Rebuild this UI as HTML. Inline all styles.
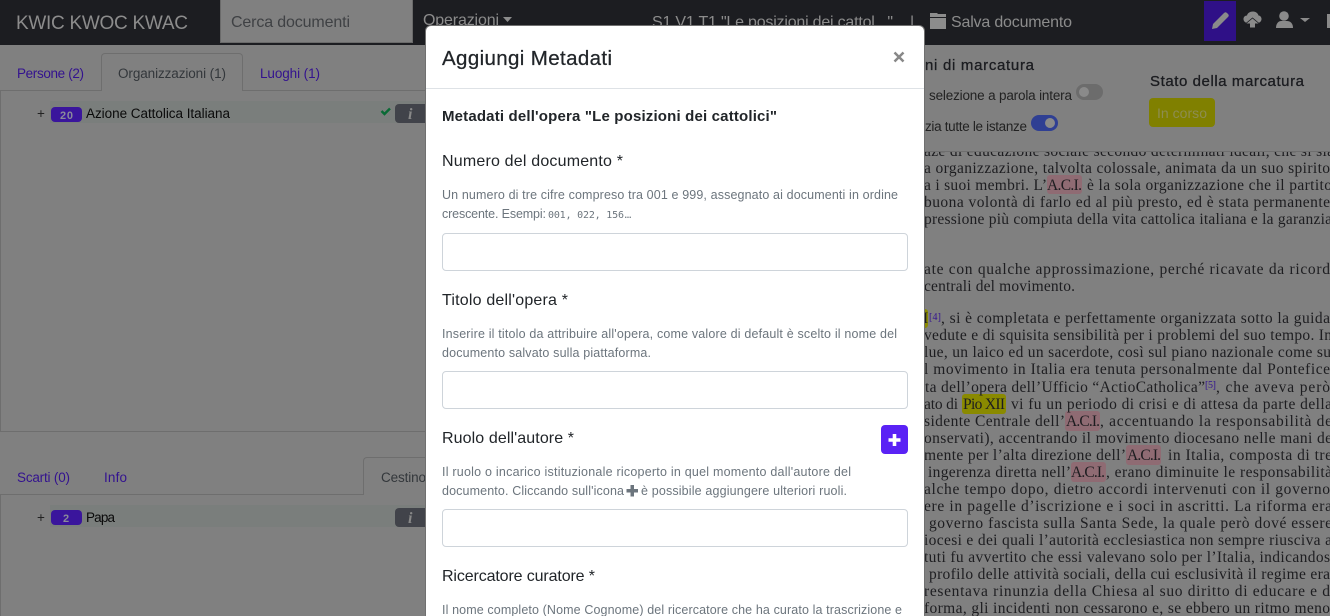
<!DOCTYPE html>
<html lang="it"><head><meta charset="utf-8"><title>KWIC KWOC KWAC</title>
<style>
html,body{margin:0;padding:0;width:1330px;height:616px;overflow:hidden;background:#808080}
.b{position:absolute;box-sizing:border-box}
svg{position:absolute;left:0;top:0}
text{font-family:"Liberation Sans",sans-serif;white-space:pre}
.s{font-family:"Liberation Serif",serif;font-size:15.5px;fill:#1d1d20}
.n{font-size:16px;fill:#8c8c8c}
.l{font-size:13.5px;fill:#33128f}
.a{font-size:13.5px;fill:#33373b}
.d{font-size:13.5px;fill:#0a0a0a}
.m{font-size:16px;fill:#212529}
.h{font-size:12.5px;fill:#6c757d}
.u{font-size:15px;fill:#1b1c20;stroke:#1b1c20;stroke-width:.3px}
</style></head><body>
<div class="b" style="left:0;top:0;width:1330px;height:45px;background:#1c1d21"></div>
<input class="b" style="left:220px;top:0;width:193px;height:43px;background:#808080;border:1px solid #6a6a6a;border-top:0;padding:0" aria-label="Cerca">
<div class="b" style="left:1204px;top:1px;width:32px;height:40px;background:#2f1087"></div>

<div class="b" style="left:0;top:90px;width:426px;height:342px;border:1px solid #6e6e6e;border-right:0"></div>
<div class="b" style="left:101px;top:53px;width:142px;height:38px;background:#808080;border:1px solid #6e6e6e;border-bottom:0;border-radius:4px 4px 0 0"></div>
<div class="b" style="left:50px;top:101px;width:376px;height:22px;background:#7a7e7c"></div>
<div class="b" style="left:51px;top:107px;width:31px;height:15px;background:#3a159c;border-radius:4px"></div>
<div class="b" style="left:395px;top:104px;width:31px;height:19px;background:#41434a;border-radius:4px 0 0 4px"></div>

<div class="b" style="left:0;top:494px;width:426px;height:122px;border:1px solid #6e6e6e;border-right:0;border-bottom:0"></div>
<div class="b" style="left:363px;top:457px;width:63px;height:38px;background:#808080;border:1px solid #6e6e6e;border-bottom:0;border-right:0;border-radius:4px 0 0 0"></div>
<div class="b" style="left:50px;top:505px;width:376px;height:22px;background:#7a7e7c"></div>
<div class="b" style="left:51px;top:510px;width:31px;height:15px;background:#3a159c;border-radius:4px"></div>
<div class="b" style="left:395px;top:508px;width:31px;height:19px;background:#41434a;border-radius:4px 0 0 4px"></div>

<div class="b" style="left:1076px;top:84px;width:27px;height:16px;background:#6c6c6c;border-radius:8px"></div>
<div class="b" style="left:1079px;top:87px;width:10px;height:10px;background:#8a8a8a;border-radius:50%"></div>
<div class="b" style="left:1031px;top:115px;width:27px;height:16px;background:#2f3f93;border-radius:8px"></div>
<div class="b" style="left:1045px;top:118px;width:10px;height:10px;background:#8a8a8a;border-radius:50%"></div>
<div class="b" style="left:1149px;top:98px;width:66px;height:29px;background:#808000;border-radius:4px"></div>
<div class="b" style="left:924px;top:151px;width:406px;height:1px;background:#6e6e6e"></div>

<div class="b" style="left:1047px;top:175px;width:35px;height:19px;background:#8f6b73;border-radius:3px"></div>
<div class="b" style="left:920px;top:309px;width:8px;height:19px;background:#8a8a00;border-radius:3px"></div>
<div class="b" style="left:962px;top:394px;width:44px;height:20px;background:#8a8a00;border-radius:3px"></div>
<div class="b" style="left:1065px;top:411px;width:35px;height:20px;background:#8f6b73;border-radius:3px"></div>
<div class="b" style="left:1126px;top:445px;width:35px;height:20px;background:#8f6b73;border-radius:3px"></div>
<div class="b" style="left:1071px;top:462px;width:35px;height:20px;background:#8f6b73;border-radius:3px"></div>

<svg width="1330" height="616" viewBox="0 0 1330 616">
<defs><clipPath id="cl"><rect x="924" y="152" width="406" height="464"/></clipPath></defs>
<text class="n" x="16" y="29" style="font-size:19px" textLength="172">KWIC KWOC KWAC</text>
<text x="231" y="27" style="font-size:16px;fill:#3f4144" textLength="119">Cerca documenti</text>
<text class="n" x="423" y="25" textLength="76">Operazioni</text>
<path d="M503 17h9l-4.5 5z" fill="#8c8c8c"/>
<text class="n" x="652" y="27" textLength="241">S1 V1 T1 "Le posizioni dei cattol..."</text>
<text class="n" x="910" y="27">|</text>
<path d="M930 15v-2h7l1 1h8v3h-16zM930 18h16v11h-16z" fill="#8c8c8c"/>
<text class="n" x="951" y="27" textLength="121">Salva documento</text>
<path d="M1212 29l1-5 11-11c1-1 2-1 3 0l1 1c1 1 1 2 0 3l-11 11z" fill="#8a8a8a"/>
<path d="M1248 23c-3 0-4.500-2-4.500-4 0-2 1.500-3.500 3.500-3.500 .5-2.500 3-4 6-4 3 0 5 2 5.500 4 2 .2 3 2 3 3.500 0 2-1.500 4-4 4z" fill="#8a8a8a"/>
<path d="M1252.500 18.500l6 5h-3.500v4h-5v-4h-3.500z" fill="#8a8a8a" stroke="#1c1d21" stroke-width="1.500" paint-order="stroke"/>
<circle cx="1284" cy="16" r="4.800" fill="#8a8a8a"/><path d="M1276 28c0-5 3-7 5-7h6c3 0 6 2 6 7z" fill="#8a8a8a"/>
<path d="M1300 18h10l-5 4z" fill="#8a8a8a"/>
<rect x="1327" y="14" width="4" height="14" fill="#8a8a8a"/>

<text class="l" x="17" y="78" textLength="67">Persone (2)</text>
<text class="a" x="118" y="78" textLength="108">Organizzazioni (1)</text>
<text class="l" x="260" y="78" textLength="60">Luoghi (1)</text>
<text class="d" x="37" y="118" style="fill:#222">+</text>
<text x="60" y="119" style="font-size:11px;font-weight:700;fill:#8a8a9a" textLength="13">20</text>
<text class="d" x="86" y="118" textLength="144">Azione Cattolica Italiana</text>
<path d="M381.500 111l3 3 5.500-5.500" stroke="#0a6a35" stroke-width="2.400" fill="none"/>
<text x="408" y="119" style="font-family:'Liberation Serif',serif;font-style:italic;font-weight:700;font-size:16px;fill:#888">i</text>

<text class="l" x="17" y="482" textLength="53">Scarti (0)</text>
<text class="l" x="104" y="482" textLength="23">Info</text>
<text class="a" x="381" y="482" textLength="45">Cestino</text>
<text class="d" x="37" y="522" style="fill:#222">+</text>
<text x="63" y="522" style="font-size:11px;font-weight:700;fill:#8a8a9a">2</text>
<text class="d" x="86" y="522" textLength="29">Papa</text>
<text x="408" y="523" style="font-family:'Liberation Serif',serif;font-style:italic;font-weight:700;font-size:16px;fill:#888">i</text>

<text class="u" x="925" y="70" textLength="109">ni di marcatura</text>
<text class="d" x="929" y="100" style="fill:#222" textLength="143">selezione a parola intera</text>
<text class="d" x="925" y="131" style="fill:#222" textLength="102">zia tutte le istanze</text>
<text class="u" x="1150" y="86" textLength="154">Stato della marcatura</text>
<text x="1157" y="118" style="font-size:14px;fill:#8d8d50" textLength="50">In corso</text>

<g clip-path="url(#cl)">
<text class="s" x="924" y="156" textLength="410">aze di educazione sociale secondo determinati ideali, che si sia</text>
<text class="s" x="924" y="173" textLength="406">a organizzazione, talvolta colossale, animata da un suo spirito</text>
<text class="s" x="924" y="190" textLength="123">a i suoi membri. L’</text>
<text class="s" x="1047" y="190" textLength="35">A.C.I.</text>
<text class="s" x="1087" y="190" textLength="245">è la sola organizzazione che il partito</text>
<text class="s" x="924" y="207" textLength="406">buona volontà di farlo ed al più presto, ed è stata permanente</text>
<text class="s" x="924" y="224" textLength="408">pressione più compiuta della vita cattolica italiana e la garanzia</text>
<text class="s" x="924" y="274" textLength="406">ate con qualche approssimazione, perché ricavate da ricord</text>
<text class="s" x="924" y="291" textLength="151">centrali del movimento.</text>
<text class="s" x="923" y="323">I</text>
<text x="929" y="320" style="font-family:'Liberation Serif',serif;font-size:10px;fill:#33128f" textLength="12">[4]</text>
<text class="s" x="941" y="323" textLength="389">, si è completata e perfettamente organizzata sotto la guida</text>
<text class="s" x="924" y="340" textLength="408">vedute e di squisita sensibilità per i problemi del suo tempo. In</text>
<text class="s" x="924" y="357" textLength="407">lue, un laico ed un sacerdote, così sul piano nazionale come su</text>
<text class="s" x="924" y="374" textLength="406">l movimento in Italia era tenuta personalmente dal Pontefice</text>
<text class="s" x="925" y="392" textLength="280">ta dell’opera dell’Ufficio “ActioCatholica”</text>
<text x="1205" y="388" style="font-family:'Liberation Serif',serif;font-size:10px;fill:#33128f" textLength="11">[5]</text>
<text class="s" x="1216" y="392" textLength="114">, che aveva però</text>
<text class="s" x="924" y="409" textLength="34">ato di</text>
<text class="s" x="963" y="409" textLength="42">Pio XII</text>
<text class="s" x="1011" y="409" textLength="321">vi fu un periodo di crisi e di attesa da parte della</text>
<text class="s" x="924" y="426" textLength="141">sidente Centrale dell’</text>
<text class="s" x="1066" y="426" textLength="34">A.C.I.</text>
<text class="s" x="1100" y="426" textLength="232">, accentuando la responsabilità de</text>
<text class="s" x="924" y="443" textLength="408">onservati), accentrando il movimento diocesano nelle mani de</text>
<text class="s" x="924" y="460" textLength="202">mente per l’alta direzione dell’</text>
<text class="s" x="1127" y="460" textLength="34">A.C.I.</text>
<text class="s" x="1168" y="460" textLength="164">in Italia, composta di tre</text>
<text class="s" x="928" y="477" textLength="143">ingerenza diretta nell’</text>
<text class="s" x="1071" y="477" textLength="34">A.C.I.</text>
<text class="s" x="1106" y="477" textLength="226">, erano diminuite le responsabilità</text>
<text class="s" x="924" y="494" textLength="406">alche tempo dopo, dietro accordi intervenuti con il governo</text>
<text class="s" x="924" y="511" textLength="408">ere in pagelle d’iscrizione e i soci in ascritti. La riforma era</text>
<text class="s" x="929" y="528" textLength="403">governo fascista sulla Santa Sede, la quale però dové essere</text>
<text class="s" x="924" y="545" textLength="408">iocesi e dei quali l’autorità ecclesiastica non sempre riusciva a</text>
<text class="s" x="924" y="562" textLength="406">tuti fu avvertito che essi valevano solo per l’Italia, indicandos</text>
<text class="s" x="929" y="579" textLength="401">profilo delle attività sociali, della cui esclusività il regime era</text>
<text class="s" x="924" y="596" textLength="406">resentava rinunzia della Chiesa al suo diritto di educare e d</text>
<text class="s" x="924" y="613" textLength="406">forma, gli incidenti non cessarono e, se ebbero un ritmo meno</text>
</g>
</svg>

<div class="b" style="left:425px;top:25px;width:500px;height:591px;background:#fff;border-radius:6px 6px 0 0;border:1px solid #707070;border-bottom:0"></div>
<div class="b" style="left:426px;top:88px;width:498px;height:1px;background:#dee2e6"></div>
<input class="b" style="left:442px;top:233px;width:466px;height:38px;border:1px solid #ced4da;border-radius:4px;background:#fff" aria-label="Numero">
<input class="b" style="left:442px;top:371px;width:466px;height:38px;border:1px solid #ced4da;border-radius:4px;background:#fff" aria-label="Titolo">
<input class="b" style="left:442px;top:509px;width:466px;height:38px;border:1px solid #ced4da;border-radius:4px;background:#fff" aria-label="Ruolo">
<div class="b" style="left:881px;top:425px;width:27px;height:29px;background:#5a22f5;border-radius:4px"></div>

<svg width="1330" height="616" viewBox="0 0 1330 616">
<text x="442" y="65" style="font-size:20.5px;fill:#212529;stroke:#212529;stroke-width:.25px" textLength="170">Aggiungi Metadati</text>
<path d="M894.500 52.500l9 9M903.500 52.500l-9 9" stroke="#888" stroke-width="2.500" fill="none"/>
<text x="442" y="121" style="font-size:15px;font-weight:700;fill:#212529" textLength="335">Metadati dell'opera "Le posizioni dei cattolici"</text>
<text class="m" x="442" y="166" textLength="181">Numero del documento *</text>
<text class="h" x="442" y="199" textLength="456">Un numero di tre cifre compreso tra 001 e 999, assegnato ai documenti in ordine</text>
<text class="h" x="442" y="218" textLength="104">crescente. Esempi:</text>
<text x="548" y="218" style="font-family:'DejaVu Sans Mono',monospace;font-size:10px;fill:#6c757d" textLength="76">001, 022, 156</text>
<text class="h" x="624" y="218" textLength="8">...</text>
<text class="m" x="442" y="305" textLength="126">Titolo dell'opera *</text>
<text class="h" x="442" y="338" textLength="455">Inserire il titolo da attribuire all'opera, come valore di default è scelto il nome del</text>
<text class="h" x="442" y="357" textLength="209">documento salvato sulla piattaforma.</text>
<text class="m" x="442" y="443" textLength="132">Ruolo dell'autore *</text>
<path d="M892.700 434h3.600v4.200h4.200v3.600h-4.200v4.200h-3.600v-4.200h-4.200v-3.600h4.200z" fill="#fff"/>
<text class="h" x="442" y="476" textLength="409">Il ruolo o incarico istituzionale ricoperto in quel momento dall'autore del</text>
<text class="h" x="442" y="495" textLength="182">documento. Cliccando sull'icona</text>
<path d="M630.500 485h3.500v4h4v3.500h-4v4h-3.500v-4h-4v-3.500h4z" fill="#6c757d"/>
<text class="h" x="641" y="495" textLength="206">è possibile aggiungere ulteriori ruoli.</text>
<text class="m" x="442" y="581" textLength="153">Ricercatore curatore *</text>
<text class="h" x="442" y="614" textLength="460">Il nome completo (Nome Cognome) del ricercatore che ha curato la trascrizione e</text>
</svg>
</body></html>
